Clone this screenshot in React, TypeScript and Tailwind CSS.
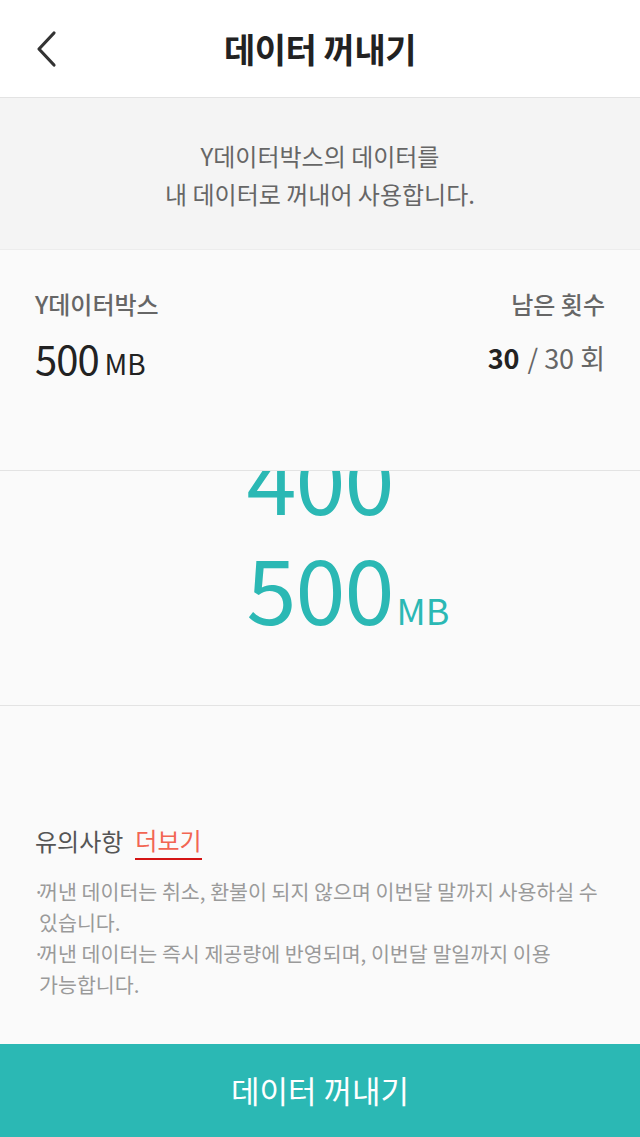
import React, { useState } from 'react';

const notices = [
  '꺼낸 데이터는 취소, 환불이 되지 않으며 이번달 말까지 사용하실 수 있습니다.',
  '꺼낸 데이터는 즉시 제공량에 반영되며, 이번달 말일까지 이용 가능합니다.',
];

const amounts = [400, 500];

const App: React.FC = () => {
  const [selected] = useState(500);
  const remaining = 30;

  return (
    <div className="flex h-[1137px] w-full flex-col overflow-hidden bg-[#fafafa] font-['Noto_Sans_CJK_KR','Noto_Sans',sans-serif]">
      {/* header */}
      <header className="relative flex h-[98px] shrink-0 items-center justify-center border-b border-[#e3e3e3] bg-white">
        <button className="absolute left-[30px] top-[25px] p-[5px] text-[#333]">
          <svg width="24" height="38" viewBox="0 0 24 38" fill="none">
            <polyline points="19,3 4,19 19,35" stroke="currentColor" strokeWidth="3.2" strokeLinecap="round" strokeLinejoin="round" />
          </svg>
        </button>
        <h1 className="text-[34px] font-bold leading-none tracking-[-0.5px] text-[#222]">데이터 꺼내기</h1>
      </header>

      {/* intro */}
      <div className="flex h-[152px] shrink-0 flex-col items-center justify-center border-b border-[#ececec] bg-[#f4f4f4] pt-[2px] text-center text-[24px] leading-[38px] text-[#666]">
        <p>Y데이터박스의 데이터를</p>
        <p>내 데이터로 꺼내어 사용합니다.</p>
      </div>

      {/* box info */}
      <div className="flex h-[221px] shrink-0 justify-between border-b border-[#e3e3e3] px-[35px] pt-[38px]">
        <div className="flex flex-col">
          <span className="text-[24px] font-medium leading-[32px] text-[#666]">Y데이터박스</span>
          <div className="mt-[14px] flex items-baseline gap-[6px] text-[#222]">
            <span className="text-[40px] leading-[48px] tracking-[-1px]">500</span>
            <span className="text-[28px]">MB</span>
          </div>
        </div>
        <div className="flex flex-col items-end">
          <span className="text-[24px] font-medium leading-[32px] text-[#666]">남은 횟수</span>
          <div className="mt-[14px] flex items-baseline gap-[8px] leading-[48px]">
            <span className="text-[27px] font-bold text-[#222]">{remaining}</span>
            <span className="text-[27px] text-[#666]">/ 30 회</span>
          </div>
        </div>
      </div>

      {/* amount picker */}
      <div className="flex h-[235px] shrink-0 flex-col justify-end overflow-hidden border-b border-[#e3e3e3] pb-[64px]">
        {amounts.map(v => (
          <div key={v} className="grid h-[110px] shrink-0 grid-cols-[1fr_auto_1fr] items-baseline text-[#2bb8b4]">
            <span />
            <span className="text-[90px] leading-[110px] tracking-[-1px]">{v}</span>
            {v === selected ? (
              <span className="pl-[3px] text-[36px]">MB</span>
            ) : (
              <span />
            )}
          </div>
        ))}
      </div>

      {/* notices */}
      <div className="flex flex-1 flex-col px-[35px] pt-[116px]">
        <div className="flex items-center gap-[12px] text-[24px] leading-[36px]">
          <span className="text-[#555]">유의사항</span>
          <span className="border-b-2 border-[#d41414] text-[#f26552]">더보기</span>
        </div>
        <ul className="-ml-[2px] mt-[16px] flex flex-col text-[20.6px] leading-[31px] text-[#9a9a9a]">
          {notices.map((n, i) => (
            <li key={i} className="break-keep pl-[6px] indent-[-6px]">
              <span className="inline-block w-[6px] indent-0">·</span>
              {n}
            </li>
          ))}
        </ul>
      </div>

      {/* action */}
      <button className="flex h-[93px] w-full shrink-0 items-center justify-center bg-[#2bb8b4] text-[31px] text-white">
        데이터 꺼내기
      </button>
    </div>
  );
};

export default App;
